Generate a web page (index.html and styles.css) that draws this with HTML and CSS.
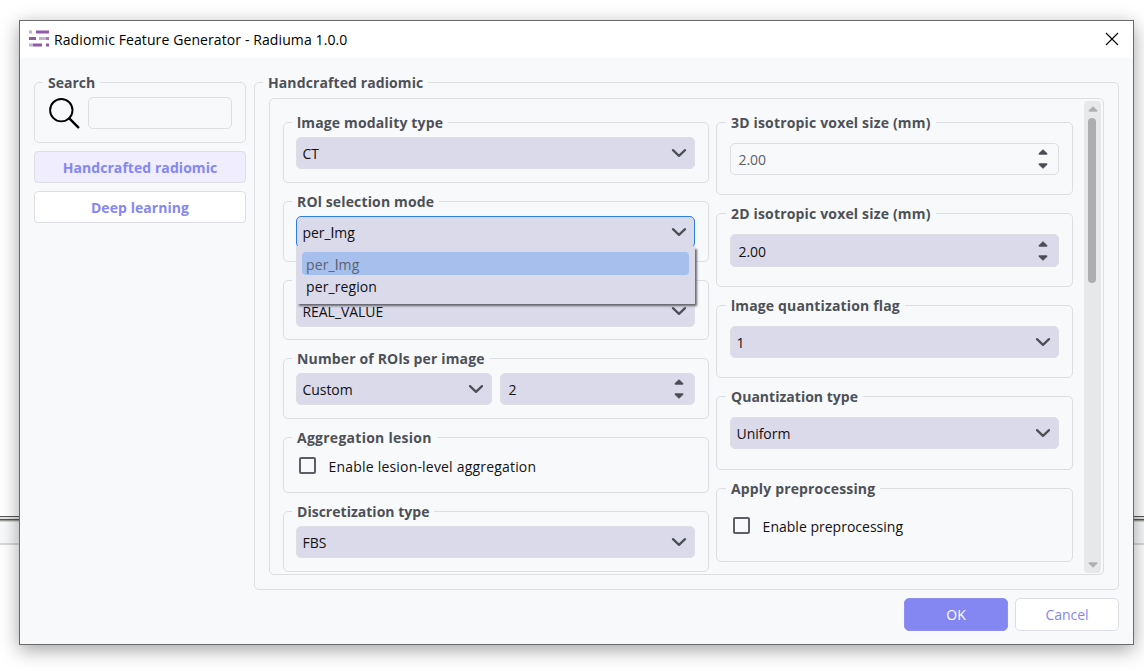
FILE: index.html
```html
<!DOCTYPE html>
<html lang="en">
<head>
<meta charset="utf-8">
<title>Radiomic Feature Generator - Radiuma 1.0.0</title>
<link rel="stylesheet" href="styles.css">
</head>
<body>
<svg class="defs" width="0" height="0" aria-hidden="true">
  <symbol id="chevron" viewBox="0 0 16 10"><path d="M2 2.1 8 7.9 14 2.1" fill="none" stroke="#4d5157" stroke-width="2.3" stroke-linecap="round" stroke-linejoin="round"/></symbol>
  <symbol id="up" viewBox="0 0 10 6"><path d="M5 .6 9.2 4.6Q9.2 5.6 8.4 5.6H1.6Q.8 5.6.8 4.6Z" fill="currentColor" stroke="currentColor" stroke-width=".5" stroke-linejoin="round"/></symbol>
  <symbol id="down" viewBox="0 0 10 6"><path d="M5 5.4.8 1.4Q.8.4 1.6.4H8.4Q9.2.4 9.2 1.4Z" fill="currentColor" stroke="currentColor" stroke-width=".5" stroke-linejoin="round"/></symbol>
</svg>
<div class="backdrop"><div class="rule"></div><div class="strip"></div></div>

<div class="dialog">
  <header class="titlebar">
    <svg class="logo" width="20" height="17" viewBox="0 0 20 17">
      <g fill="#9259a8"><path d="M7 .5h13v3H7zM0 7h7v3H0zM4 13.5h9v3H4zM17 13.5h3v3h-3z"/></g>
      <g fill="#c9aed6"><path d="M0 .5h3v3H0zM10 7h7v3h-7zM0 13.5h4v3H0z"/></g>
      <path d="M17 7h3v3h-3z" fill="#a77bb9"/>
    </svg>
    <span class="title">Radiomic Feature Generator - Radiuma 1.0.0</span>
    <svg class="close" width="14" height="14" viewBox="0 0 14 14"><path d="M1 1 13 13M13 1 1 13" stroke="#000" stroke-width="1.1"/></svg>
  </header>
  <div class="body">
    <aside class="sidebar">
      <fieldset class="group search">
        <legend>Search</legend>
        <div class="search-row">
          <svg width="31" height="31" viewBox="0 0 31 31"><circle cx="12.3" cy="12.2" r="11.2" fill="none" stroke="#000" stroke-width="1.9"/><path d="M20.3 20.3 29.3 29.3" stroke="#000" stroke-width="2.4" stroke-linecap="round"/></svg>
          <div class="search-input"></div>
        </div>
      </fieldset>
      <div class="tab active">Handcrafted radiomic</div>
      <div class="tab">Deep learning</div>
    </aside>
    <main class="content">
      <fieldset class="group outer">
        <legend>Handcrafted radiomic</legend>
        <div class="scroll">
          <div class="col left">
            <fieldset class="group"><legend><b>I</b>mage modality type</legend>
              <div class="field"><span>CT</span><svg class="chev"><use href="#chevron"/></svg></div>
            </fieldset>
            <fieldset class="group roi"><legend>RO<b>I</b> selection mode</legend>
              <div class="field focus"><span>per_<b>I</b>mg</span><svg class="chev"><use href="#chevron"/></svg></div>
              <div class="popup"><div class="option selected">per_<b>I</b>mg</div><div class="option">per_region</div></div>
            </fieldset>
            <fieldset class="group short"><legend class="blank"></legend>
              <div class="field"><span>REAL_VALUE</span><svg class="chev"><use href="#chevron"/></svg></div>
            </fieldset>
            <fieldset class="group"><legend>Number of RO<b>I</b>s per image</legend>
              <div class="pair">
                <div class="field"><span>Custom</span><svg class="chev"><use href="#chevron"/></svg></div>
                <div class="field spin"><span>2</span><div class="arrows"><svg><use href="#up"/></svg><svg><use href="#down"/></svg></div></div>
              </div>
            </fieldset>
            <fieldset class="group agg"><legend class="wide">Aggregation lesion</legend>
              <div class="check"><i></i><span>Enable lesion-level aggregation</span></div>
            </fieldset>
            <fieldset class="group"><legend class="tight">Discretization type</legend>
              <div class="field"><span>FBS</span><svg class="chev"><use href="#chevron"/></svg></div>
            </fieldset>
          </div>
          <div class="col right">
            <fieldset class="group short"><legend class="roomy">3D isotropic voxel size (mm)</legend>
              <div class="field spin disabled"><span>2.00</span><div class="arrows"><svg><use href="#up"/></svg><svg><use href="#down"/></svg></div></div>
            </fieldset>
            <fieldset class="group"><legend class="roomy">2D isotropic voxel size (mm)</legend>
              <div class="field spin tall"><span>2.00</span><div class="arrows"><svg><use href="#up"/></svg><svg><use href="#down"/></svg></div></div>
            </fieldset>
            <fieldset class="group short"><legend><b>I</b>mage quantization flag</legend>
              <div class="field"><span>1</span><svg class="chev"><use href="#chevron"/></svg></div>
            </fieldset>
            <fieldset class="group"><legend class="tight">Quantization type</legend>
              <div class="field"><span>Uniform</span><svg class="chev"><use href="#chevron"/></svg></div>
            </fieldset>
            <fieldset class="group"><legend>Apply preprocessing</legend>
              <div class="check"><i></i><span>Enable preprocessing</span></div>
            </fieldset>
          </div>
          <div class="scrollbar"><svg><use href="#up"/></svg><div class="track"><div class="thumb"></div></div><svg><use href="#down"/></svg></div>
        </div>
      </fieldset>
      <div class="actions"><div class="btn primary">OK</div><div class="btn">Cancel</div></div>
    </main>
  </div>
</div>
</body>
</html>
```
FILE: styles.css
```css
* { box-sizing: border-box; }
body {
  margin: 0;
  height: 671px;
  overflow: hidden;
  position: relative;
  background: #fff;
  font: 14px/20px "Open Sans", "Noto Sans", sans-serif;
  letter-spacing: -0.05px;
  color: #111;
}
svg { display: block; flex: none; }
.defs { position: absolute; }
/* Capital I without serifs */
b { font-family: Roboto, sans-serif; font-weight: inherit; }

/* Parent window, visible past the dialog's edges */
.backdrop { padding-top: 516px; }
.rule { height: 6px; border-top: 1px solid #555; background: linear-gradient(#e2e5e2 0 2px, #555 2px 3px, #9a9f9a 3px 4px, #d3d7d3 4px); }
.strip { height: 23px; background: #f8f9fb; border-bottom: 2px solid #d9d9d9; }

.dialog {
  position: absolute;
  left: 19px;
  top: 20px;
  width: 1115px;
  height: 625px;
  border: 1px solid #6b6b6b;
  background: #f8f9fb;
  box-shadow: 0 5px 18px rgba(0, 0, 0, .36);
  display: flex;
  flex-direction: column;
}
.titlebar { height: 37px; flex: none; background: #fff; display: flex; align-items: center; padding: 0 14px 2px 9px; }
.title { margin-left: 5px; flex: 1; color: #000; padding-top: 3px; letter-spacing: .1px; }
.body { flex: 1; display: flex; gap: 8px; padding: 14px 14px 13px; }

.sidebar { width: 212px; display: flex; flex-direction: column; gap: 8px; }
.group { margin: 0; min-width: 0; border: 1px solid #dcdee1; border-radius: 5px; padding: 4px 13px 0 12px; height: 71px; }
.group > legend { margin-left: -4px; padding: 0 5px; height: 21px; line-height: 22px; font-weight: 700; color: #4d5157; white-space: nowrap; letter-spacing: .15px; }
.group > legend.wide { letter-spacing: .26px; }
.group > legend.roomy { letter-spacing: .17px; }
.group > legend.tight { letter-spacing: .02px; }
.search { padding-left: 14px; }
.group.search > legend { margin-left: -6px; letter-spacing: 0; }
.search-row { display: flex; gap: 8px; }
.search-row svg { margin-top: 1px; }
.search-input { flex: 1; height: 32px; border: 1px solid #dcdee1; border-radius: 5px; }
.tab { height: 32px; border: 1px solid #dcdee1; border-radius: 4px; background: #fff; color: #8587f2; font-weight: 700; text-align: center; line-height: 32px; letter-spacing: .06px; }
.tab.active { background: #efedfe; }

.content { flex: 1; display: flex; flex-direction: column; }
.group.outer { height: 518px; padding: 5px 14px 14px; }
.group.outer > legend { margin-left: -6px; letter-spacing: .1px; }
.scroll { height: 477px; border: 1px solid #dcdee1; border-radius: 5px; display: flex; padding: 2px 2px 2px 13px; }
.col { display: flex; flex-direction: column; gap: 8px; padding-top: 11px; }
.left { width: 426px; margin-right: 7px; }
.right { width: 357px; margin-right: 11px; }
.left .group.short { height: 70px; }
.left .group.agg { height: 66px; }
.right .group { height: 84px; padding: 10px 13px 0; }
.right .group > legend { margin-left: -4px; }
.right .group.short { height: 83px; }
.blank { width: 134px; }

.field { height: 32px; flex: 1; border: 1px solid #dddee5; border-radius: 5px; background: #dbdaeb; display: flex; align-items: center; justify-content: space-between; padding: 0 7px 0 5.5px; }
.field > span { padding-top: 2px; }
.field.tall { height: 33px; }
.field.spin { padding-left: 7.5px; padding-right: 10px; }
.field.disabled { background: transparent; border-color: #dcdee1; color: #5c6066; }
.chev { width: 16px; height: 10px; }
.focus { border-color: #2b7de9; }
.arrows { width: 10px; display: grid; gap: 8px; color: #4a4d54; }
.arrows svg, .scrollbar svg { width: 10px; height: 6px; }
.pair { display: flex; gap: 8px; }
.pair .spin { flex: 0 0 195px; }

.roi { position: relative; }
.popup { position: absolute; left: 12px; top: 34px; width: 399px; height: 58px; padding: 6px 6px 0; background: #dbdaeb; z-index: 2; box-shadow: 2px 2px 2px -0.5px rgba(60, 60, 65, .75); }
.option { height: 22px; line-height: 23px; padding-left: 4px; letter-spacing: .1px; }
.option.selected { height: 23px; line-height: 25px; background: #a6bfed; border-radius: 4px; color: #5c6370; }

.check { display: flex; align-items: center; gap: 12.6px; padding: 0 0 0 3px; height: 22px; }
.check i { width: 17px; height: 17px; border: 2px solid #5c5f65; border-radius: 2px; }
.check span { padding-top: 3px; }
.agg .check { margin-top: 2px; letter-spacing: .19px; }
.right .check { margin-top: 5px; letter-spacing: .01px; }

.scrollbar { width: 17px; height: 472px; border-radius: 4px; background: #e7e8ea; color: #aeb0b0; display: flex; flex-direction: column; align-items: center; padding: 5px 0; }
.track { flex: 1; padding: 6px 0; }
.thumb { width: 8px; height: 165px; border-radius: 4px; background: #adafaf; margin-right: 1px; }

.actions { display: flex; justify-content: flex-end; gap: 7px; margin-top: 8px; }
.btn { width: 104px; height: 33px; border: 1px solid #dcdee6; border-radius: 5px; background: #fff; color: #8587f2; text-align: center; line-height: 32px; }
.btn.primary { background: #8486f1; border-color: #8e90f2; color: #fff; }
```
